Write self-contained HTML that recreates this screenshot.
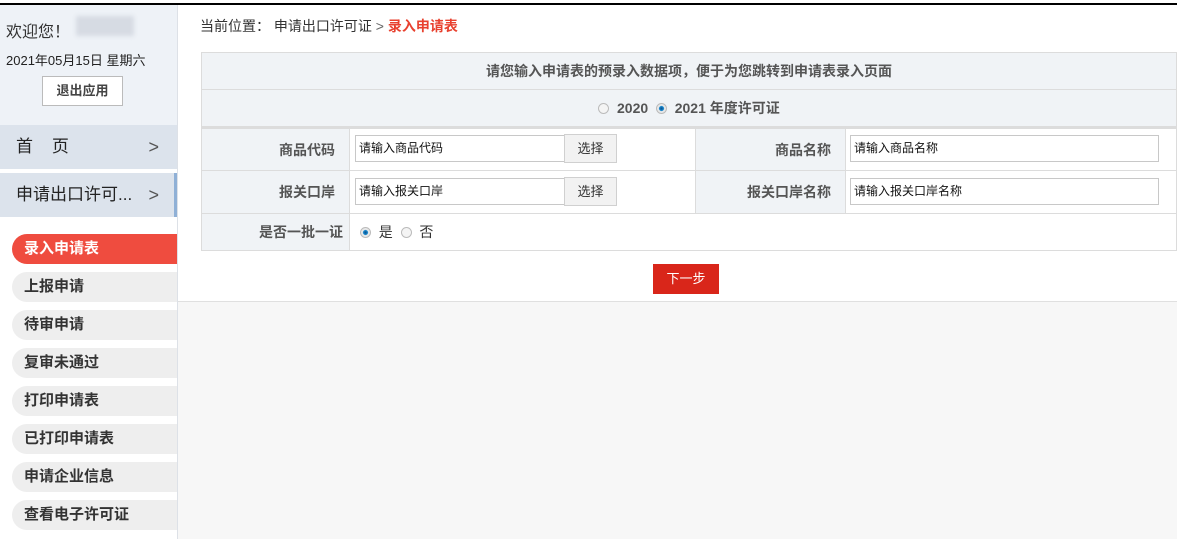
<!DOCTYPE html>
<html><head><meta charset="utf-8"><style>
*{margin:0;padding:0;box-sizing:border-box}
body{width:1177px;height:539px;overflow:hidden;background:#fff;font-family:"Liberation Sans","Noto Sans CJK SC",sans-serif;position:relative;font-size:13px;color:#333}
.abs{position:absolute}
.topline{left:0;top:3px;width:1177px;height:2px;background:#000}
.side{left:0;top:5px;width:178px;height:534px;background:#fff;border-right:1px solid #dde1e7}
.sidetop{left:0;top:5px;width:177px;height:120px;background:#eef2f7}
.bar{left:0;width:177px;height:44px;background:#dce3ec;font-size:17px;color:#222;padding-left:16px;line-height:44px}
.bar .ar{position:absolute;right:18px;top:0;color:#555;font-size:18px}
.mi{left:12px;width:165px;height:30px;background:#eee;border-radius:15px 0 0 15px;font-size:15px;font-weight:bold;color:#333;line-height:30px;padding-left:12px}
.main{left:178px;top:301px;width:999px;height:238px;background:#f7f7f7;border-top:1px solid #e0e0e0}
table{position:absolute;left:201px;top:52px;width:976px;border-collapse:collapse}
td{border:1px solid #dcdcdc}
.lb{background:#f0f3f6;text-align:right;font-weight:bold;font-size:14px;color:#555;padding-right:14px}
.inp{position:absolute;height:27px;border:1px solid #c8c8c8;background:#fff;font-size:12px;color:#111;line-height:25px;padding-left:3px}
.btn{position:absolute;height:29px;width:53px;border:1px solid #d0d0d0;background:#f2f2f2;font-size:13px;text-align:center;line-height:27px;color:#333}
.rad{display:inline-block;width:11px;height:11px;border-radius:50%;border:1px solid #bbb;background:#f4f4f4;vertical-align:-1px}
.rad.on{background:radial-gradient(circle,#0a4f8a 0,#1a8ad0 35%,#e8e8e8 45%)}
</style></head><body>
<div class="abs topline"></div>
<div class="abs side"></div>
<div class="abs sidetop"></div>
<div class="abs" style="left:6px;top:18px;font-size:16px;color:#333">欢迎您！</div>
<div class="abs" style="left:76px;top:16px;width:58px;height:20px;background:#d6dbe3;filter:blur(2px)"></div>
<div class="abs" style="left:6px;top:50px;font-size:13px;color:#222">2021年05月15日 星期六</div>
<div class="abs" style="left:42px;top:76px;width:81px;height:30px;border:1px solid #bbb;background:#fff;text-align:center;line-height:28px;font-size:13px;font-weight:bold;color:#444">退出应用</div>
<div class="abs bar" style="top:125px">首&nbsp;&nbsp;&nbsp;&nbsp;页<span class="ar">&gt;</span></div>
<div class="abs bar" style="top:173px;border-right:3px solid #8fb0d6">申请出口许可...<span class="ar" style="right:15px">&gt;</span></div>
<div class="abs mi" style="top:234px;background:#ef4c3f;color:#fff">录入申请表</div>
<div class="abs mi" style="top:272px">上报申请</div>
<div class="abs mi" style="top:310px">待审申请</div>
<div class="abs mi" style="top:348px">复审未通过</div>
<div class="abs mi" style="top:386px">打印申请表</div>
<div class="abs mi" style="top:424px">已打印申请表</div>
<div class="abs mi" style="top:462px">申请企业信息</div>
<div class="abs mi" style="top:500px">查看电子许可证</div>
<div class="abs" style="left:200px;top:16px;font-size:14px;color:#333">当前位置：&nbsp;申请出口许可证 <span style="color:#666">&gt;</span> <b style="color:#e8412f">录入申请表</b></div>
<table>
<tr style="height:37px"><td colspan="4" style="background:#f0f3f6;text-align:center;font-weight:bold;font-size:14px;color:#555">请您输入申请表的预录入数据项，便于为您跳转到申请表录入页面</td></tr>
<tr style="height:38px"><td colspan="4" style="background:#f0f3f6;text-align:center;font-weight:bold;font-size:14px;color:#555;border-bottom:3px solid #dcdcdc"><span class="rad"></span>&nbsp; 2020 &nbsp;<span class="rad on"></span>&nbsp; 2021 年度许可证</td></tr>
<tr style="height:43px"><td class="lb" style="width:148px">商品代码</td><td style="width:346px"></td><td class="lb" style="width:150px">商品名称</td><td></td></tr>
<tr style="height:43px"><td class="lb">报关口岸</td><td></td><td class="lb">报关口岸名称</td><td></td></tr>
<tr style="height:37px"><td class="lb" style="padding-right:6px">是否一批一证</td><td colspan="3" style="font-size:14px;padding-left:10px"><span class="rad on"></span>&nbsp; 是 &nbsp;<span class="rad"></span>&nbsp; 否</td></tr>
</table>
<div class="inp" style="left:355px;top:135px;width:210px">请输入商品代码</div>
<div class="btn" style="left:564px;top:134px">选择</div>
<div class="inp" style="left:850px;top:135px;width:309px">请输入商品名称</div>
<div class="inp" style="left:355px;top:178px;width:210px">请输入报关口岸</div>
<div class="btn" style="left:564px;top:177px">选择</div>
<div class="inp" style="left:850px;top:178px;width:309px">请输入报关口岸名称</div>
<div class="abs" style="left:653px;top:264px;width:66px;height:30px;background:#d9261a;color:#fff;text-align:center;line-height:30px;font-size:13px">下一步</div>
<div class="abs main"></div>
</body></html>
